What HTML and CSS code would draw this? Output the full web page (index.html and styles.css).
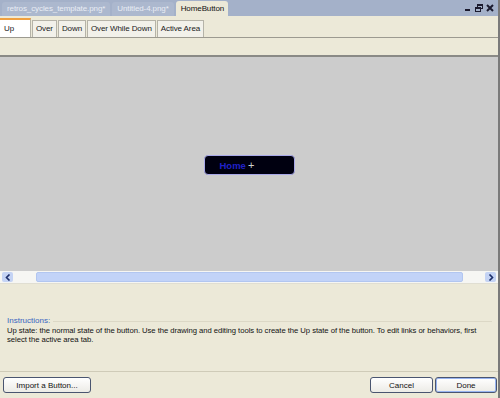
FILE: index.html
```html
<!DOCTYPE html>
<html lang="en">
<head>
    <meta charset="UTF-8">
    <title>HomeButton</title>
    <link rel="stylesheet" href="styles.css">
</head>
<body>
    <div class="window">
        <div class="doc-tabs">
            <div class="doc-tab">retros_cycles_template.png*</div>
            <div class="doc-tab">Untitled-4.png*</div>
            <div class="doc-tab active">HomeButton</div>
            <div class="win-controls">
                <svg width="8" height="8" viewBox="0 0 8 8"><rect x="1" y="5" width="5" height="2" fill="#1a1a2e"/></svg>
                <svg width="8" height="8" viewBox="0 0 8 8"><rect x="2.5" y="0.5" width="5" height="4" fill="none" stroke="#1a1a2e"/><rect x="2.5" y="0.5" width="5" height="1.5" fill="#1a1a2e"/><rect x="0.5" y="3.5" width="5" height="4" fill="#a4b1c9" stroke="#1a1a2e"/><rect x="0.5" y="3.5" width="5" height="1.5" fill="#1a1a2e"/></svg>
                <svg width="8" height="8" viewBox="0 0 8 8"><path d="M1 1 L7 7 M7 1 L1 7" stroke="#1a1a2e" stroke-width="2"/></svg>
            </div>
        </div>

        <div class="state-tabs">
            <div class="state-tab active">Up</div>
            <div class="state-tab">Over</div>
            <div class="state-tab">Down</div>
            <div class="state-tab">Over While Down</div>
            <div class="state-tab">Active Area</div>
        </div>

        <div class="band"></div>

        <div class="canvas">
            <div class="home-btn">
                <span class="home-label">Home</span>
                <span class="cursor">+</span>
            </div>
        </div>

        <div class="hscroll">
            <div class="arrow">
                <svg width="6" height="7" viewBox="0 0 6 7"><path d="M4.5 0.5 L1.5 3.5 L4.5 6.5" fill="none" stroke="#1d2f6b" stroke-width="1.6"/></svg>
            </div>
            <div class="track">
                <div class="thumb"></div>
            </div>
            <div class="arrow">
                <svg width="6" height="7" viewBox="0 0 6 7"><path d="M1.5 0.5 L4.5 3.5 L1.5 6.5" fill="none" stroke="#1d2f6b" stroke-width="1.6"/></svg>
            </div>
        </div>

        <div class="panel">
            <div class="group-title">
                <span>Instructions:</span>
                <div class="group-line"></div>
            </div>
            <p class="instructions">Up state: the normal state of the button. Use the drawing and editing tools to create the Up state of the button. To edit links or behaviors, first select the active area tab.</p>
        </div>

        <div class="footer">
            <button class="btn import">Import a Button...</button>
            <div class="spacer"></div>
            <button class="btn cancel">Cancel</button>
            <button class="btn done">Done</button>
        </div>
    </div>
</body>
</html>
```

FILE: styles.css
```css
body {
    margin: 0;
    font-family: 'Liberation Sans', Arial, sans-serif;
    font-size: 8px;
    color: #1a1a1a;
}
.window {
    width: 500px;
    height: 398px;
    background: #ece9d8;
    display: flex;
    flex-direction: column;
    box-sizing: border-box;
    border-right: 2px solid #7a7a7a;
}
.doc-tabs {
    height: 16px;
    background: #a4b1c9;
    display: flex;
    align-items: flex-end;
    padding-left: 2px;
    gap: 2px;
}
.doc-tab {
    height: 14px;
    line-height: 14px;
    padding: 0 5px;
    background: #acb8ce;
    color: #e9edf5;
    border-radius: 3px 3px 0 0;
    font-size: 8px;
    letter-spacing: -0.1px;
}
.doc-tab.active {
    background: #ece9d8;
    color: #111;
    height: 15px;
    line-height: 15px;
    padding-right: 4px;
}
.win-controls {
    margin-left: auto;
    align-self: center;
    display: flex;
    gap: 3px;
    padding-right: 4px;
}
.state-tabs {
    height: 22px;
    display: flex;
    align-items: flex-end;
    border-bottom: 1px solid #9c9a90;
    box-sizing: border-box;
}
.state-tab {
    height: 16px;
    line-height: 16px;
    padding: 0 3px;
    background: #f2f1ea;
    border: 1px solid #b5b3a8;
    border-bottom: none;
    margin-right: 1px;
    font-size: 8px;
    letter-spacing: -0.1px;
}
.state-tab.active {
    height: 19px;
    line-height: 18px;
    background: #ffffff;
    border-top: 2px solid #f0a040;
    border-left: none;
    padding: 0 6px 0 4px;
    box-sizing: border-box;
    width: 31px;
}
.band {
    height: 17px;
    border-bottom: 2px solid #8a8a86;
}
.canvas {
    height: 214px;
    background: #cccccc;
    display: flex;
    align-items: center;
    justify-content: center;
    padding-top: 2px;
    box-sizing: border-box;
}
.home-btn {
    width: 91px;
    height: 20px;
    box-sizing: border-box;
    background: #000010;
    border: 1px solid #a8a8e8;
    border-radius: 4px;
    display: flex;
    align-items: center;
    padding-left: 15px;
}
.home-label {
    color: #2020c8;
    font-weight: bold;
    font-size: 9.5px;
}
.cursor {
    color: #cfcfcf;
    font-size: 11px;
    line-height: 10px;
    margin-left: 2px;
}
.hscroll {
    height: 13px;
    display: flex;
    background: #f6f6f3;
    border-bottom: 1px solid #e0ded2;
    padding: 1px 2px;
    box-sizing: border-box;
}
.arrow {
    width: 11px;
    background: #c4d3f4;
    border-radius: 2px;
    display: flex;
    align-items: center;
    justify-content: center;
}
.track {
    flex: 1;
    display: flex;
    padding: 0 22px 0 23px;
}
.thumb {
    flex: 1;
    background: #c2d3f8;
    border: 1px solid #b2c6f0;
    border-radius: 2px;
}
.panel {
    height: 88px;
    padding: 32px 6px 0 7px;
    box-sizing: border-box;
    border-bottom: 1px solid #cfcbb8;
}
.group-title {
    display: flex;
    align-items: center;
    color: #3864c0;
    line-height: 9px;
}
.group-line {
    flex: 1;
    height: 1px;
    background: #dcd8c6;
    margin-left: 3px;
    margin-top: 1px;
}
.instructions {
    margin: 1px 0 0 0;
    line-height: 9px;
    font-size: 7.7px;
    letter-spacing: -0.05px;
    color: #111;
}
.footer {
    flex: 1;
    display: flex;
    align-items: flex-start;
    padding: 5px 1px 0 3px;
}
.spacer {
    flex: 1;
}
.btn {
    height: 16px;
    font-family: 'Liberation Sans', Arial, sans-serif;
    font-size: 8px;
    color: #111;
    background: linear-gradient(#ffffff, #ecebe6);
    border: 1px solid #4a5570;
    border-radius: 3px;
    padding: 0;
    flex: none;
}
.btn.import {
    width: 88px;
}
.btn.cancel {
    width: 63px;
}
.btn.done {
    width: 62px;
    margin-left: 2px;
    box-shadow: inset 0 0 0 1px #98b4f0;
}
```
